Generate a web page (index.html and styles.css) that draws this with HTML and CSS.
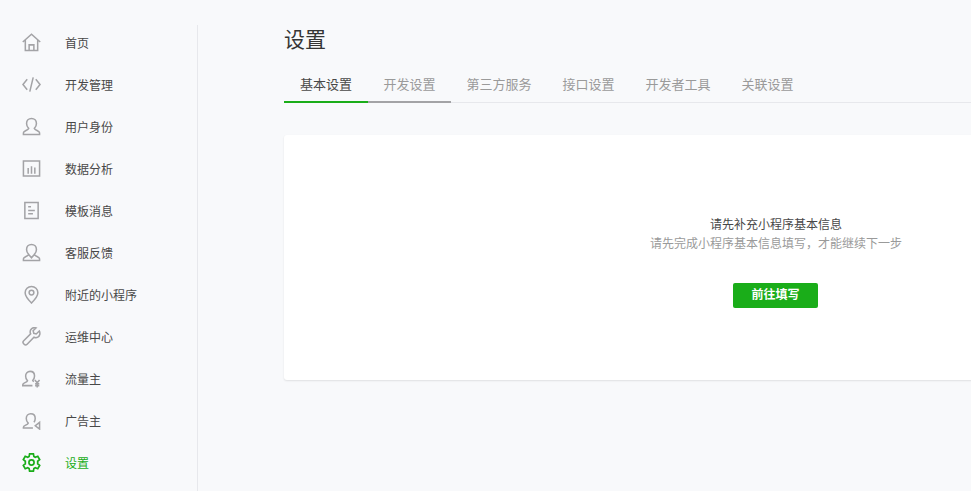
FILE: index.html
```html
<!DOCTYPE html>
<html lang="zh-CN">
<head>
    <meta charset="UTF-8">
    <title>设置</title>
    <link rel="stylesheet" href="styles.css">
</head>
<body>
    <div class="page">
        <div class="sidebar">
            <a class="nav_item">
                <svg class="nav_icon" viewBox="0 0 20 20"><path d="M.8 9.500 10 1.300l9.200 8.200M3.500 7.500v11h13v-11M7.500 18.500v-6h5v6"/></svg>
                <span>首页</span>
            </a>
            <a class="nav_item">
                <svg class="nav_icon" viewBox="0 0 20 20"><path d="M5.500 4.500 1 10l4.500 5.500M14.500 4.500 19 10l-4.500 5.500M11.800 2.500 8.200 17.500"/></svg>
                <span>开发管理</span>
            </a>
            <a class="nav_item">
                <svg class="nav_icon" viewBox="0 0 20 20"><path d="M1.500 18.500h17v-1.800c0-2-4.800-2.700-5.500-4.700 1.300-1.300 2.200-3 2.200-5.200 0-3-2.200-5.300-5.200-5.300S4.800 3.800 4.800 6.800c0 2.200.9 3.900 2.200 5.200-.7 2-5.500 2.700-5.500 4.700z"/></svg>
                <span>用户身份</span>
            </a>
            <a class="nav_item">
                <svg class="nav_icon" viewBox="0 0 20 20"><path d="M1.500 2h17v16h-17zM6.500 15.500v-6M10 15.500V7.500M13.500 15.500V9"/></svg>
                <span>数据分析</span>
            </a>
            <a class="nav_item">
                <svg class="nav_icon" viewBox="0 0 20 20"><path d="M3 1.500h14v17H3zM6.500 6h3M6.500 10h7M6.500 13.500h5"/></svg>
                <span>模板消息</span>
            </a>
            <a class="nav_item">
                <svg class="nav_icon" viewBox="0 0 20 20"><path d="M1.500 18.500h17v-1.800c0-2-4.800-2.700-5.500-4.700 1.300-1.300 2.200-3 2.200-5.200 0-3-2.200-5.300-5.200-5.300S4.800 3.800 4.800 6.800c0 2.200.9 3.900 2.200 5.200-.7 2-5.500 2.700-5.500 4.700zM7 12l3 3.500 3-3.500"/></svg>
                <span>客服反馈</span>
            </a>
            <a class="nav_item">
                <svg class="nav_icon" viewBox="0 0 20 20"><path d="M10 19C6.500 15.500 3.300 12 3.300 8.200 3.300 4.400 6.300 1.500 10 1.500s6.700 2.900 6.700 6.700c0 3.800-3.200 7.300-6.700 10.800z"/><circle cx="10" cy="8" r="2.500"/></svg>
                <span>附近的小程序</span>
            </a>
            <a class="nav_item">
                <svg class="nav_icon" viewBox="0 0 20 20"><path d="M18.200 4.200 15 7.300l-2.600-.7-.7-2.600 3.100-3c-2.300-.7-4.700.1-5.700 2.100-.7 1.400-.6 2.900 0 4.100L1.800 14.500c-.9.900-.9 2.300 0 3.200l.4.400c.9.900 2.300.9 3.200 0l7.200-7.300c1.300.6 2.800.6 4.100-.1 2-1.100 2.800-4.200 1.500-6.500z"/></svg>
                <span>运维中心</span>
            </a>
            <a class="nav_item">
                <svg class="nav_icon" viewBox="0 0 20 20"><path d="M11 17.500H.8v-1c0-1.800 4.300-2.300 5-4.200-1.200-1.200-2-2.900-2-4.900C3.800 4.500 5.800 2.500 8.500 2.500s4.700 2 4.700 4.900c0 1.800-.8 3.500-1.900 4.700.2.500.6.900 1.100 1.300M13.500 11.500l2.500 3 2.500-3M16 14.500v5M13.800 15.500h4.400M13.800 17.500h4.400"/></svg>
                <span>流量主</span>
            </a>
            <a class="nav_item">
                <svg class="nav_icon" viewBox="0 0 20 20"><path d="M11.500 18H1.500v-1c0-1.800 4.300-2.300 5-4.200-1.200-1.200-2-2.900-2-4.900 0-2.900 2-4.900 4.700-4.900s4.700 2 4.700 4.900c0 1.500-.5 2.900-1.300 4M18.500 12v7l-4.500-3.500z"/></svg>
                <span>广告主</span>
            </a>
            <a class="nav_item active">
                <svg class="nav_icon" viewBox="0 0 20 20"><path d="M8 1h4l.5 2.700 1.500.8 2.600-1 2 3.400-2.100 1.800v2.600l2.100 1.800-2 3.400-2.600-1-1.500.8L12 19H8l-.5-2.700-1.500-.8-2.600 1-2-3.400 2.100-1.800V8.700L1.400 6.900l2-3.400 2.600 1 1.500-.8z"/><circle cx="10" cy="10" r="2.700"/></svg>
                <span>设置</span>
            </a>
        </div>
        <div class="main">
            <h2 class="page_title">设置</h2>
            <div class="tabs">
                <a class="tab selected">基本设置</a>
                <a class="tab hovered">开发设置</a>
                <a class="tab">第三方服务</a>
                <a class="tab">接口设置</a>
                <a class="tab">开发者工具</a>
                <a class="tab">关联设置</a>
            </div>
            <div class="card">
                <p class="card_title">请先补充小程序基本信息</p>
                <p class="card_desc">请先完成小程序基本信息填写，才能继续下一步</p>
                <a class="btn_primary">前往填写</a>
            </div>
        </div>
    </div>
</body>
</html>
```
FILE: styles.css
```css
html, body {
    margin: 0;
    padding: 0;
    height: 100%;
    overflow: hidden;
}
body {
    background-color: #f8f9fb;
    font-family: "Liberation Sans", "Noto Sans CJK SC", sans-serif;
    font-size: 12px;
    color: #484848;
}
.page {
    display: flex;
    height: 491px;
}
/* Sidebar */
.sidebar {
    position: relative;
    box-sizing: border-box;
    flex: none;
    width: 198px;
    padding-top: 22px;
}
.sidebar::after {
    content: "";
    position: absolute;
    top: 25px;
    right: 0;
    bottom: 0;
    width: 1px;
    background-color: #e7e8ec;
}
.nav_item {
    display: flex;
    align-items: center;
    height: 42px;
    padding-left: 22px;
}
.nav_item span {
    padding-bottom: 2px;
}
.nav_icon {
    flex: none;
    width: 19px;
    height: 19px;
    margin-right: 24px;
    margin-bottom: 1px;
    fill: none;
    stroke: #a3a3a6;
    stroke-width: 1.6;
}
.nav_item.active {
    color: #1aad19;
}
.nav_item.active .nav_icon {
    stroke: #1aad19;
    stroke-width: 1.8;
}
/* Main */
.main {
    flex: none;
    width: 1000px;
    padding-left: 86px;
}
.page_title {
    margin: 0;
    padding-top: 25px;
    font-size: 21px;
    font-weight: 400;
    line-height: 30px;
    color: #353535;
}
.tabs {
    display: flex;
    margin-top: 15px;
    border-bottom: 1px solid #e7e8ec;
}
.tab {
    height: 33px;
    padding: 0 15.5px;
    margin-bottom: -1px;
    font-size: 13px;
    line-height: 30px;
    color: #9a9a9a;
    border-bottom: 2px solid transparent;
    box-sizing: border-box;
}
.tab.selected {
    color: #484848;
    padding: 0 16px;
    border-bottom-color: #1aad19;
}
.tab.hovered {
    border-bottom-color: #a3a3a6;
}
.card {
    box-sizing: border-box;
    width: 984px;
    height: 245px;
    margin-top: 32px;
    padding-top: 81px;
    background-color: #fff;
    border-radius: 3px;
    box-shadow: 0 1px 2px rgba(0, 0, 0, 0.1);
    text-align: center;
}
.card_title {
    margin: 0;
    line-height: 18px;
}
.card_desc {
    margin: 1px 0 0;
    line-height: 18px;
    color: #9a9a9a;
}
.btn_primary {
    display: block;
    width: 85px;
    height: 25px;
    margin: 30px 0 0 449px;
    line-height: 25px;
    color: #fff;
    font-weight: 700;
    background-color: #1aad19;
    border-radius: 2px;
}
```
